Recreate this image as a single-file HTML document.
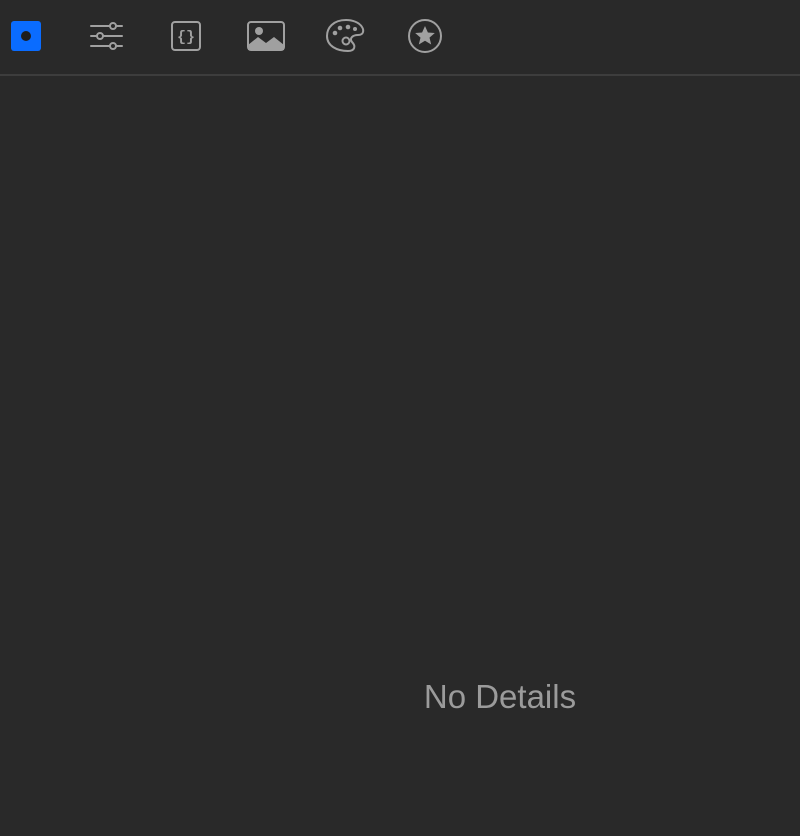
<!DOCTYPE html>
<html><head><style>
html,body{margin:0;padding:0;background:#292929;width:800px;height:836px;overflow:hidden;font-family:"Liberation Sans",sans-serif}
.bar{position:absolute;left:0;top:0;width:800px;height:74px;border-bottom:2px solid #3d3d3d}
svg{position:absolute;left:0;top:0}
.t{position:absolute;left:300px;width:400px;top:678px;text-align:center;color:#9b9b9b;font-size:33px}
</style></head><body>
<div class="bar"></div>
<svg width="460" height="74" viewBox="0 0 460 74">
<rect x="11" y="21" width="30" height="30" rx="3" fill="#0a6cff"/>
<circle cx="26" cy="36" r="5" fill="#1e1e1e"/>
<g stroke="#a0a0a0" stroke-width="2" fill="#292929" stroke-linecap="round">
<line x1="91" y1="26" x2="122" y2="26"/><line x1="91" y1="36" x2="122" y2="36"/><line x1="91" y1="46" x2="122" y2="46"/>
<circle cx="113" cy="26" r="3"/><circle cx="100" cy="36" r="3"/><circle cx="113" cy="46" r="3"/>
<rect x="172" y="22" width="28" height="28" rx="3"/>
<rect x="248" y="22" width="36" height="28" rx="3"/>
<circle cx="425" cy="36" r="16"/>
<path d="M346 20 C333 20 327 28 327 36 C327 46 337 51 348 51 C355 51 356 46 352 42 C349 38 353 35 358 35 C364 35 364 30 362 27 C359 22 352 20 346 20 Z"/>
</g>
<text x="186" y="41" font-size="15" font-weight="bold" fill="#a0a0a0" text-anchor="middle" font-family="Liberation Mono">{}</text>
<circle cx="259" cy="31" r="4" fill="#a0a0a0"/>
<path d="M248 50 L248 45 L258 37 L266 43 L274 37 L284 45 L284 50 Z" fill="#a0a0a0"/>
<circle cx="335" cy="33" r="2.3" fill="#a0a0a0"/><circle cx="340" cy="28" r="2.3" fill="#a0a0a0"/><circle cx="348" cy="27" r="2.3" fill="#a0a0a0"/><circle cx="355" cy="29" r="2" fill="#a0a0a0"/>
<circle cx="346" cy="41" r="3.5" fill="none" stroke="#a0a0a0" stroke-width="2"/>
<path d="M425 26 L427.9 32.5 L434.8 33 L429.5 37.6 L431.2 44.5 L425 40.8 L418.8 44.5 L420.5 37.6 L415.2 33 L422.1 32.5 Z" fill="#a0a0a0"/>
</svg>
<div class="t">No Details</div>
</body></html>
